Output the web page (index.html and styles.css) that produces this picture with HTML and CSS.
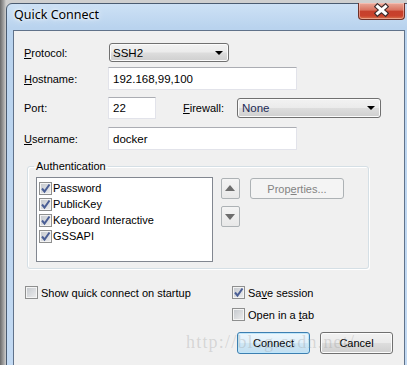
FILE: index.html
```html
<!DOCTYPE html>
<html lang="en">
<head>
    <meta charset="UTF-8">
    <title>Quick Connect</title>
    <link rel="stylesheet" href="styles.css">
</head>
<body>
    <div class="window">
        <div class="titlebar">
            <span class="title">Quick Connect</span>
            <span class="close">
                <svg width="47" height="17" viewBox="0 0 47 17">
                    <path d="M19.5 4.5 L27.5 11.5 M27.5 4.5 L19.5 11.5" stroke="#3b2a2a" stroke-width="5.2" stroke-linecap="square"/>
                    <path d="M19.5 4.5 L27.5 11.5 M27.5 4.5 L19.5 11.5" stroke="#ffffff" stroke-width="3" stroke-linecap="square"/>
                </svg>
            </span>
        </div>
        <div class="client">
            <div class="row row-protocol">
                <span class="lbl"><u>P</u>rotocol:</span>
                <div class="combo combo-protocol">SSH2</div>
            </div>
            <div class="row row-host">
                <span class="lbl"><u>H</u>ostname:</span>
                <div class="edit edit-wide">192.168,99,100</div>
            </div>
            <div class="row row-port">
                <span class="lbl">Port:</span>
                <div class="edit edit-port">22</div>
                <span class="lbl lbl-fw"><u>F</u>irewall:</span>
                <div class="combo combo-fw">None</div>
            </div>
            <div class="row row-user">
                <span class="lbl"><u>U</u>sername:</span>
                <div class="edit edit-wide">docker</div>
            </div>

            <fieldset class="group">
                <legend>Authentication</legend>
                <div class="group-body">
                    <ul class="listbox">
                        <li><span class="cb checked"><svg width="11" height="11" viewBox="0 0 11 11"><path d="M2 5.5 L4.5 8.5 L9.5 1.5" fill="none" stroke="#4a5e95" stroke-width="2"/></svg></span>Password</li>
                        <li><span class="cb checked"><svg width="11" height="11" viewBox="0 0 11 11"><path d="M2 5.5 L4.5 8.5 L9.5 1.5" fill="none" stroke="#4a5e95" stroke-width="2"/></svg></span>PublicKey</li>
                        <li><span class="cb checked"><svg width="11" height="11" viewBox="0 0 11 11"><path d="M2 5.5 L4.5 8.5 L9.5 1.5" fill="none" stroke="#4a5e95" stroke-width="2"/></svg></span>Keyboard Interactive</li>
                        <li><span class="cb checked"><svg width="11" height="11" viewBox="0 0 11 11"><path d="M2 5.5 L4.5 8.5 L9.5 1.5" fill="none" stroke="#4a5e95" stroke-width="2"/></svg></span>GSSAPI</li>
                    </ul>
                    <div class="arrows">
                        <button class="arrow arrow-up"></button>
                        <button class="arrow arrow-down"></button>
                    </div>
                    <button class="btn btn-disabled">Prop<u>e</u>rties...</button>
                </div>
            </fieldset>

            <div class="options">
                <label class="check check-startup"><span class="cb"></span><span>Show quick connect on startup</span></label>
                <div class="options-right">
                    <label class="check"><span class="cb checked"><svg width="11" height="11" viewBox="0 0 11 11"><path d="M2 5.5 L4.5 8.5 L9.5 1.5" fill="none" stroke="#4a5e95" stroke-width="2"/></svg></span><span>Sa<u>v</u>e session</span></label>
                    <label class="check"><span class="cb"></span><span>Open in a <u>t</u>ab</span></label>
                </div>
            </div>

            <div class="buttons">
                <button class="btn btn-default">Connect</button>
                <button class="btn">Cancel</button>
            </div>

            <div class="watermark">http://blog.csdn.net/</div>
        </div>
    </div>
</body>
</html>
```

FILE: styles.css
```css
body {
    margin: 0;
    width: 407px;
    height: 365px;
    overflow: hidden;
    background: linear-gradient(to right, #6a6a6a, #a9a9a9 4px, #cfcfcf 6px);
    font-family: "Liberation Sans", Arial, sans-serif;
    font-size: 11px;
    color: #000;
}
u {
    text-decoration: underline;
    text-underline-offset: 1px;
}
.window {
    margin: 3px 0 0 6px;
    width: 412px;
    height: 380px;
    box-sizing: border-box;
    border: 1px solid #4a5b70;
    border-radius: 6px 6px 0 0;
    padding-left: 6px;
    background: linear-gradient(#cde1f5, #b9d3ee 24px, #c3daf3);
    display: flex;
    flex-direction: column;
}
.titlebar {
    width: 392px;
    height: 26px;
    display: flex;
    align-items: flex-start;
}
.title {
    font-family: "Noto Sans", sans-serif;
    font-size: 12.5px;
    line-height: 16px;
    padding: 3px 0 0 1px;
    text-shadow: 0 0 6px #fff, 0 0 3px #fff;
}
.close {
    margin-left: auto;
    margin-top: -1px;
    width: 47px;
    height: 17px;
    box-sizing: border-box;
    border: 1px solid #6e3128;
    border-top: none;
    border-radius: 0 0 4px 4px;
    background: linear-gradient(#e9a99a, #d9725f 45%, #c6402c 50%, #c9412c 80%, #d8774f);
    box-shadow: inset 0 0 0 1px rgba(255, 210, 200, 0.5);
    overflow: hidden;
}
.close svg {
    display: block;
    margin: -1px 0 0 -1px;
}
.client {
    position: relative;
    width: 392px;
    flex: 1;
    box-sizing: border-box;
    border: 1px solid #60728a;
    background: #f0f0f0;
    padding-left: 10px;
}

/* form rows */
.row {
    display: flex;
    align-items: center;
}
.lbl {
    width: 84px;
    flex: none;
}
.row-protocol {
    margin-top: 12px;
    height: 19px;
}
.row-host {
    margin-top: 5px;
    height: 23px;
}
.row-port {
    margin-top: 7px;
    height: 22px;
}
.row-user {
    margin-top: 8px;
    height: 23px;
}
.lbl-fw {
    width: 54px;
    margin-left: 27px;
}
.edit {
    height: 100%;
    box-sizing: border-box;
    border: 1px solid #e2e3ea;
    border-top-color: #abadb3;
    background: #fff;
    padding-left: 4px;
    display: flex;
    align-items: center;
    font-size: 11.5px;
}
.edit-wide {
    width: 189px;
}
.edit-port {
    width: 48px;
}
.combo {
    position: relative;
    box-sizing: border-box;
    border: 1px solid #707070;
    border-radius: 3px;
    background: linear-gradient(#f2f2f2, #ebebeb 48%, #dddddd 52%, #cfcfcf);
    box-shadow: inset 0 0 0 1px #fbfbfb;
    display: flex;
    align-items: center;
    padding-left: 3px;
    font-size: 11.5px;
}
.combo::after {
    content: "";
    position: absolute;
    right: 5px;
    top: 50%;
    margin-top: -2px;
    border-left: 4px solid transparent;
    border-right: 4px solid transparent;
    border-top: 4px solid #000;
}
.combo-protocol {
    width: 120px;
    height: 19px;
    margin-left: 1px;
}
.combo-fw {
    width: 144px;
    height: 20px;
    padding-left: 4px;
    color: #1c2a55;
}

/* authentication group */
.group {
    margin: 9px 0 0 3px;
    padding: 4px 0 6px 8px;
    width: 342px;
    box-sizing: border-box;
    border: 1px solid #d5dfe5;
    border-radius: 3px;
    box-shadow: inset 1px 1px 0 #fff, 1px 1px 0 #fff;
}
.group legend {
    padding: 0 2px;
    margin-left: -2px;
    line-height: 14px;
}
.group-body {
    display: flex;
    align-items: flex-start;
}
.listbox {
    list-style: none;
    margin: 0;
    padding: 2px 0 0 2px;
    width: 177px;
    height: 85px;
    box-sizing: border-box;
    border: 1px solid #828790;
    background: #fff;
}
.listbox li {
    height: 16px;
    display: flex;
    align-items: center;
}
.listbox .cb {
    margin-right: 1px;
}
.cb {
    width: 13px;
    height: 13px;
    flex: none;
    box-sizing: border-box;
    border: 1px solid #8e8f8f;
    background: linear-gradient(135deg, #c3c7cc, #eeeeef);
    box-shadow: inset 0 0 0 1px #f4f4f4;
    display: flex;
    align-items: center;
    justify-content: center;
}
.cb svg {
    display: block;
}
.arrows {
    display: flex;
    flex-direction: column;
    gap: 7px;
    margin: 1px 0 0 8px;
}
.arrow {
    position: relative;
    width: 19px;
    height: 21px;
    padding: 0;
    box-sizing: border-box;
    border: 1px solid #adb2b5;
    border-radius: 2px;
    background: linear-gradient(#f4f4f4, #e8e8e8);
}
.arrow::after {
    content: "";
    position: absolute;
    left: 3px;
    top: 6px;
    border-left: 5px solid transparent;
    border-right: 5px solid transparent;
}
.arrow-up::after {
    border-bottom: 6px solid #6d6d6d;
}
.arrow-down::after {
    top: 7px;
    border-top: 6px solid #6d6d6d;
}
.btn {
    font-family: "Liberation Sans", Arial, sans-serif;
    font-size: 11px;
    color: #000;
    height: 22px;
    width: 73px;
    padding: 0;
    box-sizing: border-box;
    border: 1px solid #707070;
    border-radius: 3px;
    background: linear-gradient(#f2f2f2, #ebebeb 48%, #dddddd 52%, #cfcfcf);
    box-shadow: inset 0 0 0 1px #fcfcfc;
}
.btn-disabled {
    margin: 1px 0 0 10px;
    width: 94px;
    height: 21px;
    color: #838383;
    border-color: #adb2b5;
    background: #f4f4f4;
    box-shadow: none;
}
.btn-default {
    border-color: #3c7fb1;
    background: linear-gradient(#eef7fc, #e0f0fa 48%, #cfe7f5 52%, #c2dff1);
    box-shadow: inset 0 0 0 1px #bfe6fa;
}

/* bottom options */
.options {
    margin-top: 17px;
    display: flex;
}
.check {
    display: flex;
    align-items: center;
    height: 13px;
    gap: 3px;
}
.check-startup {
    width: 207px;
    margin-left: 1px;
}
.options-right {
    display: flex;
    flex-direction: column;
    gap: 9px;
}
.buttons {
    margin: 11px 0 0 213px;
    display: flex;
    gap: 10px;
}
.watermark {
    position: absolute;
    left: 172px;
    top: 301px;
    font-family: "Liberation Serif", serif;
    font-size: 18px;
    letter-spacing: 1.2px;
    color: rgba(150, 150, 150, 0.3);
    pointer-events: none;
}
```
